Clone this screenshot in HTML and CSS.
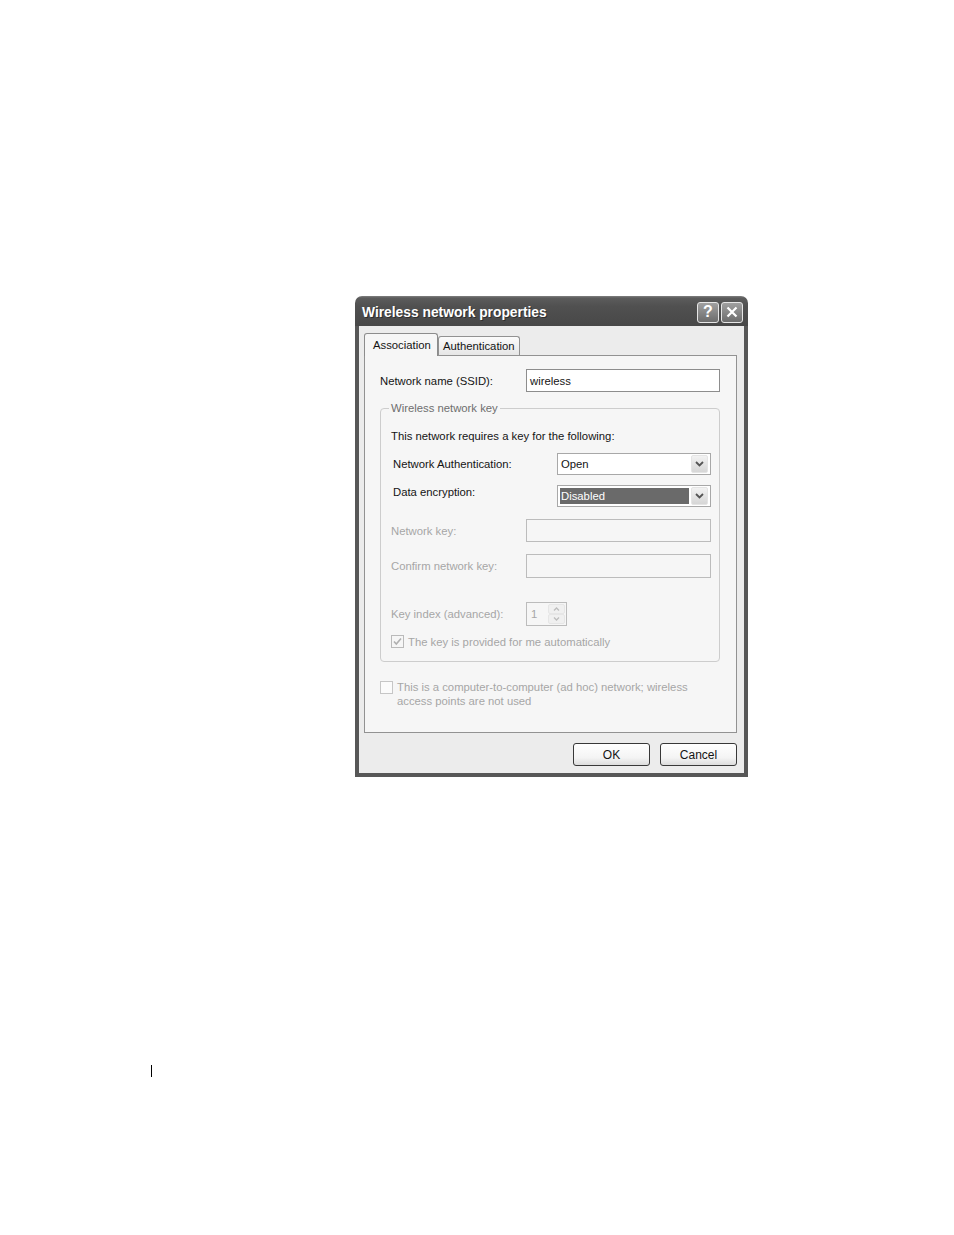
FILE: index.html
```html
<!DOCTYPE html>
<html>
<head>
<meta charset="utf-8">
<title>Wireless network properties</title>
<link rel="stylesheet" href="styles.css">
</head>
<body>
<div class="page">
  <div class="dialog">
    <div class="titlebar">
      <span class="title">Wireless network properties</span>
      <div class="tbtns">
        <span class="tbtn help">?</span>
        <span class="tbtn close"><svg width="12" height="12" viewBox="0 0 12 12"><path d="M1.5 1.5 L10.5 10.5 M10.5 1.5 L1.5 10.5" stroke="#fff" stroke-width="2.2" fill="none"/></svg></span>
      </div>
    </div>
    <div class="client">
      <div class="tabs">
        <div class="tab active">Association</div>
        <div class="tab">Authentication</div>
      </div>
      <div class="panel">
        <div class="row ssid">
          <span class="lbl">Network name (SSID):</span>
          <div class="input">wireless</div>
        </div>
        <div class="group">
          <span class="legend">Wireless network key</span>
          <div class="gtext">This network requires a key for the following:</div>
          <div class="grow auth">
            <span class="slbl">Network Authentication:</span>
            <div class="select"><span class="sval">Open</span><span class="sbtn"><svg width="9" height="6" viewBox="0 0 9 6"><polyline points="1,1 4.5,4.5 8,1" stroke="#555" stroke-width="1.8" fill="none"/></svg></span></div>
          </div>
          <div class="grow enc">
            <span class="slbl top">Data encryption:</span>
            <div class="select"><span class="sval hl">Disabled</span><span class="sbtn"><svg width="9" height="6" viewBox="0 0 9 6"><polyline points="1,1 4.5,4.5 8,1" stroke="#555" stroke-width="1.8" fill="none"/></svg></span></div>
          </div>
          <div class="grow netkey">
            <span class="dlbl">Network key:</span>
            <div class="dinput"></div>
          </div>
          <div class="grow confirm">
            <span class="dlbl">Confirm network key:</span>
            <div class="dinput"></div>
          </div>
          <div class="grow keyidx">
            <span class="dlbl">Key index (advanced):</span>
            <div class="spin">
              <span class="spinval">1</span>
              <span class="spinbtns">
                <span class="sb"><svg width="7" height="4" viewBox="0 0 7 4"><polyline points="1,3.5 3.5,1 6,3.5" stroke="#bdbdbd" stroke-width="1.3" fill="none"/></svg></span>
                <span class="sb"><svg width="7" height="4" viewBox="0 0 7 4"><polyline points="1,0.5 3.5,3 6,0.5" stroke="#bdbdbd" stroke-width="1.3" fill="none"/></svg></span>
              </span>
            </div>
          </div>
          <div class="grow chkrow">
            <span class="cb"><svg width="11" height="11" viewBox="0 0 11 11"><polyline points="2,5.5 4.3,8 9,2.5" stroke="#b0b0b0" stroke-width="1.6" fill="none"/></svg></span>
            <span class="dtext">The key is provided for me automatically</span>
          </div>
        </div>
        <div class="adhoc">
          <span class="cb light"></span>
          <span class="dtext">This is a computer-to-computer (ad hoc) network; wireless<br>access points are not used</span>
        </div>
      </div>
      <div class="buttons">
        <button class="btn">OK</button>
        <button class="btn">Cancel</button>
      </div>
    </div>
  </div>
  <div class="marker"></div>
</div>
</body>
</html>
```
FILE: styles.css
```css
html, body {
  margin: 0;
  padding: 0;
  background: #fff;
}
.page {
  width: 954px;
  height: 1235px;
  padding-top: 296px;
  box-sizing: border-box;
  overflow: hidden;
}
.dialog {
  width: 393px;
  height: 481px;
  margin-left: 355px;
  display: flex;
  flex-direction: column;
  font-family: "Liberation Sans", Arial, sans-serif;
  font-size: 11.3px;
  color: #141414;
}
.titlebar {
  height: 30px;
  flex: none;
  display: flex;
  align-items: center;
  justify-content: space-between;
  padding: 0 5px 0 7px;
  border-radius: 7px 7px 0 0;
  background: linear-gradient(#808080 0, #5c5c5c 2px, #505050 35%, #484848 100%);
}
.title {
  color: #fff;
  font-weight: bold;
  font-size: 13.8px;
  text-shadow: 1px 1px 0 #2e2e2e;
  margin-top: 2px;
}
.tbtns {
  display: flex;
  gap: 2px;
  margin-top: 2px;
}
.tbtn {
  width: 22px;
  height: 21px;
  box-sizing: border-box;
  border: 1px solid #e6e6e6;
  border-radius: 3px;
  background: linear-gradient(#a0a0a0, #6c6c6c);
  display: flex;
  align-items: center;
  justify-content: center;
  color: #fff;
  font-weight: bold;
  font-size: 16px;
  line-height: 1;
}
.client {
  flex: 1;
  background: #ececec;
  border: 4px solid #575757;
  border-top: 0;
  display: flex;
  flex-direction: column;
}
.tabs {
  display: flex;
  align-items: flex-end;
  height: 23px;
  margin: 7px 0 0 5px;
  position: relative;
  z-index: 1;
}
.tab {
  box-sizing: border-box;
  width: 82px;
  height: 19px;
  border: 1px solid #929292;
  border-bottom: 0;
  border-radius: 3px 3px 0 0;
  background: linear-gradient(#fbfbfb, #e6e6e6);
  padding: 0 4px;
  display: flex;
  align-items: center;
  margin-bottom: 1px;
  white-space: nowrap;
}
.tab.active {
  width: 74px;
  height: 23px;
  margin-bottom: 0;
  padding-left: 8px;
  background: #f6f6f6;
  border-color: #8c8c8c;
}
.panel {
  margin: -1px 0 0 5px;
  width: 373px;
  height: 378px;
  box-sizing: border-box;
  border: 1px solid #929292;
  background: #f6f6f6;
  padding: 13px 16px 0 15px;
}
.row {
  display: flex;
  align-items: center;
  height: 23px;
}
.ssid .lbl {
  width: 146px;
  flex: none;
}
.input {
  box-sizing: border-box;
  height: 23px;
  width: 194px;
  border: 1px solid #8d8d8d;
  background: #fff;
  padding: 0 3px;
  display: flex;
  align-items: center;
}
.group {
  position: relative;
  margin-top: 16px;
  height: 254px;
  box-sizing: border-box;
  border: 1px solid #cdcdcd;
  border-radius: 4px;
  padding: 20px 8px 13px 10px;
}
.legend {
  position: absolute;
  top: -8px;
  left: 8px;
  padding: 0 2px;
  background: #f6f6f6;
  color: #6e6e6e;
  line-height: 14px;
}
.gtext {
  line-height: 14px;
}
.grow {
  display: flex;
  align-items: center;
}
.auth, .enc {
  height: 22px;
  margin-top: 10px;
}
.slbl {
  width: 164px;
  margin-left: 2px;
  flex: none;
}
.slbl.top {
  align-self: flex-start;
  line-height: 14px;
}
.select {
  width: 154px;
  height: 22px;
  box-sizing: border-box;
  border: 1px solid #a8a8a8;
  background: #fff;
  display: flex;
  align-items: center;
  padding: 1px;
}
.sval {
  flex: 1;
  height: 16px;
  margin: 0 2px 0 1px;
  padding-left: 1px;
  display: flex;
  align-items: center;
}
.sval.hl {
  background: #6a6a6a;
  color: #fff;
}
.sbtn {
  width: 17px;
  height: 18px;
  box-sizing: border-box;
  margin-right: 1px;
  background: linear-gradient(#f2f2f2, #d6d6d6);
  border: 1px solid #e4e4e4;
  border-radius: 2px;
  display: flex;
  align-items: center;
  justify-content: center;
}
.dlbl {
  width: 135px;
  flex: none;
  color: #a6a6a6;
}
.dtext {
  color: #a6a6a6;
  white-space: nowrap;
}
.netkey {
  height: 23px;
  margin-top: 12px;
}
.confirm {
  height: 24px;
  margin-top: 12px;
}
.dinput {
  width: 185px;
  height: 100%;
  box-sizing: border-box;
  border: 1px solid #bcbcbc;
}
.keyidx {
  height: 24px;
  margin-top: 24px;
}
.spin {
  display: flex;
  width: 41px;
  height: 24px;
  box-sizing: border-box;
  border: 1px solid #bcbcbc;
  padding: 1px;
}
.spinval {
  flex: 1;
  color: #a6a6a6;
  padding-left: 3px;
  display: flex;
  align-items: center;
}
.spinbtns {
  width: 17px;
  display: flex;
  flex-direction: column;
}
.sb {
  flex: 1;
  display: flex;
  align-items: center;
  justify-content: center;
  background: #f0f0f0;
  border: 1px solid #e6e6e6;
  border-radius: 2px;
}
.chkrow {
  margin-top: 9px;
  height: 13px;
}
.cb {
  width: 13px;
  height: 13px;
  flex: none;
  box-sizing: border-box;
  border: 1px solid #bababa;
  background: #f6f6f6;
  margin-right: 4px;
  display: flex;
  align-items: center;
  justify-content: center;
}
.cb.light {
  border-color: #c6c6c6;
  background: #fbfbfb;
  margin-top: 1px;
}
.adhoc {
  display: flex;
  align-items: flex-start;
  margin-top: 18px;
  line-height: 14px;
}
.buttons {
  display: flex;
  justify-content: flex-end;
  gap: 10px;
  margin: 10px 7px 0 0;
}
.btn {
  width: 77px;
  height: 23px;
  box-sizing: border-box;
  border: 1px solid #383838;
  border-radius: 3px;
  background: linear-gradient(#ffffff, #f4f4f4 65%, #dcdcdc);
  font-family: "Liberation Sans", Arial, sans-serif;
  font-size: 12px;
  color: #141414;
  padding: 0;
}
.marker {
  width: 1px;
  height: 12px;
  background: #000;
  margin: 288px 0 0 151px;
}
```
